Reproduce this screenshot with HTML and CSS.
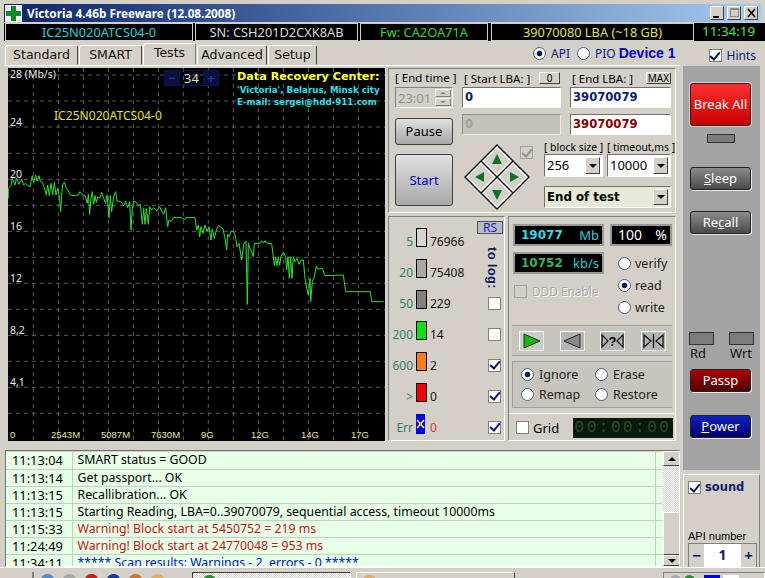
FILE: index.html
```html
<!DOCTYPE html>
<html>
<head>
<title>Victoria 4.46b Freeware</title>
<link rel="stylesheet" href="styles.css">
</head>
<body>
<div class="window">

  <header class="titlebar">
    <svg class="app-icon" width="17" height="17" viewBox="0 0 17 17">
      <rect width="17" height="17" fill="#f4f4ec"/>
      <path d="M6 1h5v5h5v5h-5v5H6v-5H1V6h5z" fill="#0f8a2a"/>
    </svg>
    <span class="title">Victoria 4.46b Freeware (12.08.2008)</span>
    <div class="win-buttons">
      <span class="win-btn"><svg width="15" height="14"><rect x="3" y="10" width="6" height="2" fill="#000"/></svg></span>
      <span class="win-btn"><svg width="15" height="14"><rect x="3.5" y="2.5" width="8" height="8" fill="none" stroke="#888"/><rect x="3" y="2" width="9" height="2" fill="#888"/></svg></span>
      <span class="win-btn"><svg width="15" height="14"><path d="M4 3l7 8M11 3l-7 8" stroke="#000" stroke-width="1.6"/></svg></span>
    </div>
  </header>

  <div class="infobar">
    <div class="info w-model cyan">IC25N020ATCS04-0</div>
    <div class="info w-sn">SN: CSH201D2CXK8AB</div>
    <div class="info w-fw green">Fw: CA2OA71A</div>
    <div class="info w-lba yellow">39070080 LBA (~18 GB)</div>
    <div class="clock">11:34:19</div>
  </div>

  <div class="tabrow">
    <div class="tabs">
      <span class="tab w-standard">Standard</span>
      <span class="tab w-smart">SMART</span>
      <span class="tab active w-tests">Tests</span>
      <span class="tab w-advanced">Advanced</span>
      <span class="tab w-setup">Setup</span>
    </div>
    <div class="modes">
      <span class="radio on"></span><span class="mode-label">API</span>
      <span class="radio"></span><span class="mode-label">PIO</span>
      <b class="device">Device 1</b>
    </div>
    <div class="hints"><span class="chk on"></span><span class="hints-label">Hints</span></div>
  </div>

  <div class="work">
    <div class="left">
      <div class="top">

        <section class="chart">
          <svg class="plot" width="377" height="373" viewBox="24 -246 1131 1119">
            <path class="grid" d="M100 -246V873M175 -246V873M250 -246V873M325 -246V873M400 -246V873M475 -246V873M550 -246V873M625 -246V873M700 -246V873M775 -246V873M850 -246V873M925 -246V873M1000 -246V873M1075 -246V873M24 -225H1155M24 -147H1155M24 -69H1155M24 10H1155M24 88H1155M24 166H1155M24 244H1155M24 322H1155M24 400H1155M24 478H1155M24 556H1155M24 634H1155M24 712H1155M24 790H1155"/>
            <g transform="translate(15,45)">
              <polyline class="trace" points="10,100 10,70 18,62 22,40 30,60 34,40 42,58 50,42 56,60 62,55 68,62 76,65 78,50 82,32 86,52 92,30 96,48 102,32 106,50 112,52 118,68 124,90 128,60 133,92 138,55 143,90 148,52 153,90 158,70 163,95 167,140 170,90 173,60 178,52 184,70 190,78 196,90 204,92 220,90 225,80 232,90 240,92 247,115 250,88 254,148 258,100 262,80 266,118 270,92 274,112 278,95 284,100 290,82 296,100 302,115 306,90 312,158 316,92 320,140 326,95 332,80 336,108 348,110 356,122 362,108 368,128 374,110 378,195 382,130 386,108 394,112 400,122 406,118 412,178 416,130 420,178 424,130 430,178 434,125 440,135 446,128 456,138 464,125 470,138 476,148 482,128 488,185 492,165 498,170 506,158 530,158 538,164 544,158 570,158"/>
            </g>
            <g transform="translate(585,165)">
              <polyline class="trace" points="0,38 5,75 10,60 14,95 18,65 24,85 30,60 36,80 42,65 48,105 52,72 58,100 64,75 70,62 76,65 84,72 90,100 95,135 98,88 103,95 108,78 118,82 122,100 126,125 132,115 140,165 146,118 153,108 157,298 160,115 165,130 170,140 175,155 178,116 196,114 200,107 206,114 210,107 214,114 230,116 235,155 238,182 242,155 246,182 250,155 254,180 258,155 265,142 272,155 275,195 279,155 283,220 287,155 291,220 295,155 300,170 306,160 312,178 318,165 325,165 330,220 335,250 340,270 345,220 347,290 352,230 358,215 364,183 368,192 382,190 390,212 445,210 448,232 452,260 526,260 530,290 566,290"/>
            </g>
          </svg>
          <div class="y-title">28 (Mb/s)</div>
          <div class="y-labels">
            <div>24</div><div>20</div><div>16</div><div>12</div><div>8,2</div><div>4,1</div>
          </div>
          <div class="x-labels">
            <span>0</span><span>2543M</span><span>5087M</span><span>7630M</span><span>9G</span><span>12G</span><span>14G</span><span>17G</span>
          </div>
          <div class="chart-model">IC25N020ATCS04-0</div>
          <div class="scale">
            <span class="scale-btn">&minus;</span><span class="scale-val">34</span><span class="scale-btn">+</span>
          </div>
          <div class="promo">
            <div class="promo-head">Data Recovery Center:</div>
            <div class="promo-line">'Victoria', Belarus, Minsk city</div>
            <div class="promo-line">E-mail: sergei@hdd-911.com</div>
          </div>
        </section>

        <section class="controls">
          <div class="upper">
            <div class="col-time">
              <div class="cap">[ End time ]</div>
              <div class="time-field">
                <span>23:01</span>
                <span class="spin"><i class="spin-btn spin-up"></i><i class="spin-btn spin-down"></i></span>
              </div>
              <div class="btn pause">Pause</div>
              <div class="btn start">Start</div>
            </div>
            <div class="col-lba">
              <div class="lba-grid">
                <div class="cap-row"><span>[ Start LBA: ]</span><span class="mini-btn w-zero">0</span></div>
                <div class="cap-row"><span>[ End LBA: ]</span><span class="mini-btn">MAX</span></div>
                <div class="field navy">0</div>
                <div class="field navy">39070079</div>
                <div class="field off">0</div>
                <div class="field maroon">39070079</div>
              </div>
              <div class="lba-bottom">
                <div class="dpad-area">
                  <svg class="dpad" width="68" height="68" viewBox="0 0 68 68">
                    <path d="M34 1L67 34 34 67 1 34z" fill="#111"/>
                    <path d="M34 3L49 18 34 33 19 18z M50 19L65 34 50 49 35 34z M18 19L33 34 18 49 3 34z M34 35L49 50 34 65 19 50z" fill="#fff"/>
                    <path d="M34 5L47 18 34 31 21 18z M50 21L63 34 50 47 37 34z M18 21L31 34 18 47 5 34z M34 37L47 50 34 63 21 50z" fill="#d4d0c8"/>
                    <path d="M34 11l5 10H29z M56 34l-9 5V29z M12 34l9-5v10z M34 57l-5-10h10z" fill="#10702a"/>
                  </svg>
                  <span class="chk dim on"></span>
                </div>
                <div class="combos">
                  <div class="combo-row">
                    <div class="w-block"><div class="cap cap-small">[ block size ]</div><div class="combo"><span class="combo-text">256</span><span class="arrow"></span></div></div>
                    <div class="w-timeout"><div class="cap cap-small">[ timeout,ms ]</div><div class="combo"><span class="combo-text">10000</span><span class="arrow"></span></div></div>
                  </div>
                  <div class="combo end-test"><span class="combo-text">End of test</span><span class="arrow"></span></div>
                </div>
              </div>
            </div>
          </div>

          <div class="lower">
            <div class="legend">
              <span class="num">5</span><span class="swatch s5"></span><span class="val">76966</span>
              <div class="log-head"><span class="rs">RS</span><span class="to-log">to log:</span></div>
              <span class="num">20</span><span class="swatch s20"></span><span class="val">75408</span>
              <span class="num">50</span><span class="swatch s50"></span><span class="val">229</span><span class="chk"></span>
              <span class="num">200</span><span class="swatch s200"></span><span class="val">14</span><span class="chk"></span>
              <span class="num">600</span><span class="swatch s600"></span><span class="val">2</span><span class="chk on"></span>
              <span class="num">&gt;</span><span class="swatch s-over"></span><span class="val">0</span><span class="chk on"></span>
              <span class="num">Err</span>
              <span class="swatch s-err"><svg width="9" height="20"><path d="M1 6l7 8M8 6l-7 8" stroke="#ffe24a" stroke-width="1.6"/></svg></span>
              <span class="val err-val">0</span><span class="chk on"></span>
            </div>

            <div class="stats">
              <div class="lcd-row">
                <div class="lcd w-mb"><b class="lcd-cyan">19077</b><span class="lcd-unit">Mb</span></div>
                <div class="lcd w-pct"><span class="lcd-white">100</span><span class="lcd-white">%</span></div>
              </div>
              <div class="mid">
                <div class="mid-left">
                  <div class="lcd w-mb"><b class="lcd-green">10752</b><span class="lcd-unit">kb/s</span></div>
                  <div class="ddd"><span class="chk dim"></span><span class="ddd-label">DDD Enable</span></div>
                </div>
                <div class="mid-right">
                  <label class="opt"><span class="radio"></span>verify</label>
                  <label class="opt"><span class="radio on"></span>read</label>
                  <label class="opt"><span class="radio"></span>write</label>
                </div>
              </div>
              <div class="transport">
                <span class="t-btn t-first"><svg width="25" height="20"><path d="M5 3l16 7-16 7z" fill="#22b014" stroke="#0a3a0a"/></svg></span>
                <span class="t-btn"><svg width="25" height="20"><path d="M20 3L4 10l16 7z" fill="#8a8a8a" stroke="#222"/></svg></span>
                <span class="t-btn"><svg width="25" height="20"><path d="M2 4l6 6-6 6zM23 4l-6 6 6 6z" fill="none" stroke="#111" stroke-width="1.3"/><text x="12.5" y="15" class="t-q">?</text></svg></span>
                <span class="t-btn"><svg width="25" height="20"><path d="M3 4l7 6-7 6zM22 4l-7 6 7 6z" fill="none" stroke="#111" stroke-width="1.3"/><path d="M12.5 3v14" stroke="#111" stroke-width="1.3"/></svg></span>
              </div>
              <div class="modes-box">
                <label class="opt"><span class="radio on"></span>Ignore</label>
                <label class="opt"><span class="radio"></span>Erase</label>
                <label class="opt"><span class="radio"></span>Remap</label>
                <label class="opt"><span class="radio"></span>Restore</label>
              </div>
              <div class="grid-row">
                <span class="chk"></span><span class="grid-label">Grid</span>
                <div class="led">00:00:00</div>
              </div>
            </div>
          </div>
        </section>
      </div>

      <section class="log">
        <table class="log-table" cellspacing="0">
          <tr><td class="t">11:13:04</td><td>SMART status = GOOD</td><td class="pad"></td></tr>
          <tr><td class="t">11:13:14</td><td>Get passport... OK</td><td class="pad"></td></tr>
          <tr><td class="t">11:13:15</td><td>Recallibration... OK</td><td class="pad"></td></tr>
          <tr><td class="t">11:13:15</td><td>Starting Reading, LBA=0..39070079, sequential access, timeout 10000ms</td><td class="pad"></td></tr>
          <tr><td class="t">11:15:33</td><td class="warn">Warning! Block start at 5450752 = 219 ms</td><td class="pad"></td></tr>
          <tr><td class="t">11:24:49</td><td class="warn">Warning! Block start at 24770048 = 953 ms</td><td class="pad"></td></tr>
          <tr><td class="t">11:34:11</td><td class="scan">***** Scan results: Warnings - 2, errors - 0 *****</td><td class="pad"></td></tr>
        </table>
        <div class="scrollbar">
          <span class="sb-btn"><i class="up"></i></span>
          <span class="sb-track"></span>
          <span class="sb-thumb"></span>
          <span class="sb-btn"><i class="arrow-down"></i></span>
        </div>
      </section>
    </div>

    <aside class="right">
      <div class="side">
        <div class="side-btn red big">Break All</div>
        <div class="small-led"></div>
        <div class="side-btn gray sleep"><span><u>S</u>leep</span></div>
        <div class="side-btn gray recall"><span>Re<u>c</u>all</span></div>
        <div class="rw">
          <div class="rw-item"><div class="rw-led"></div>Rd</div>
          <div class="rw-item"><div class="rw-led"></div>Wrt</div>
        </div>
        <div class="side-btn dark-red passp">Passp</div>
        <div class="side-btn blue power"><span><u>P</u>ower</span></div>
      </div>
      <div class="sound-box">
        <div class="sound"><span class="chk on"></span><b>sound</b></div>
        <div class="api-label">API number</div>
        <div class="api-spin"><b>&minus;</b><span>1</span><b>+</b></div>
      </div>
    </aside>
  </div>

  <footer class="taskbar">
    <span class="tb-sep"></span>
    <div class="tb-icons">
      <i class="ti ti-blue"></i><i class="ti ti-gray"></i><i class="ti ti-red"></i><i class="ti ti-navy"></i><i class="ti ti-orange"></i><i class="ti ti-tan"></i>
    </div>
    <span class="tb-task pressed"><i class="ti ti-green"></i></span>
    <span class="tb-task"><i class="ti ti-tan"></i></span>
    <div class="tray"><i class="ti ti-gray"></i><i class="ti ti-green"></i><i class="tray-blue"></i><i class="tray-white"></i></div>
  </footer>
</div>
</body>
</html>
```

FILE: styles.css
```css
* {box-sizing: border-box;}
html, body {margin: 0; padding: 0;}
body {width: 765px; height: 578px; overflow: hidden; background: #d4d0c8; color: #000; font: 12px "Noto Sans", "Liberation Sans", sans-serif;}
.window {height: 578px; padding-top: 4px; display: flex; flex-direction: column; overflow: hidden;}

/* title bar */
.titlebar {height: 18px; margin: 0 4px 1px 4px; padding-left: 1px; display: flex; align-items: center; background: linear-gradient(to right, #0a246a, #a6caf0); color: #fff;}
.title {margin-left: 5px; font: bold 11.75px "Noto Sans", sans-serif; white-space: nowrap;}
.win-buttons {margin-left: auto; margin-right: 3px; display: flex; gap: 3px;}
.win-btn {width: 14px; height: 14px; background: #d4d0c8; border: 1px solid; border-color: #fff #404040 #404040 #fff; display: flex; overflow: hidden;}
.win-btn svg {margin: -1px; flex: none;}

/* info bar */
.infobar {height: 18px; margin-left: 4px; padding: 0 0 0 1px; display: flex; gap: 2px; background: #000; font-size: 12.8px; line-height: 16px;}
.info {border: 1px solid #d0d0d0; text-align: center; color: #d8d8d8; white-space: nowrap;}
.w-model {width: 188px;}
.w-sn {width: 163px;}
.w-fw {width: 128px;}
.w-lba {width: 203px; margin-left: 1px;}
.clock {color: #55e055; margin-left: 6px; line-height: 17px; font-size: 13.4px;}
.cyan {color: #30d0d0;}
.green {color: #40d040;}
.yellow {color: #e0e060;}

/* tabs */
.tabrow {height: 24px; padding-left: 5px; display: flex; align-items: flex-end;}
.tabs {display: flex; gap: 1px; align-items: flex-end;}
.tab {height: 20px; border: 1px solid; border-color: #fff #404040 transparent #fff; border-radius: 3px 3px 0 0; text-align: center; font: 12.5px/18px "DejaVu Sans", sans-serif; color: #111;}
.tab.active {height: 22px; border-right-color: #808080; background: #d4d0c8;}
.w-standard {width: 73px;}
.w-smart {width: 63px;}
.w-tests {width: 53px;}
.w-advanced {width: 70px;}
.w-setup {width: 49px;}
.modes {margin-left: 216px; align-self: flex-start; margin-top: 5px; display: flex; align-items: center; height: 14px;}
.mode-label {margin: 0 7px 0 5px; color: #0a1a80;}
.device {margin-left: -4px; color: #0000c0; font: bold 14px "Liberation Sans", sans-serif;}
.hints {margin-left: 33px; align-self: flex-start; margin-top: 6px; display: flex; align-items: center;}
.hints-label {margin-left: 5px; color: #0a1a80; font-size: 12px;}

/* shared controls */
.radio {width: 13px; height: 13px; flex: none; border-radius: 50%; border: 1px solid #4a5a80; background: #fff; display: inline-block;}
.radio.on {background: radial-gradient(circle, #0a1a60 0 2.4px, #fff 3.2px);}
.chk {width: 13px; height: 13px; flex: none; display: grid; place-items: center; background: #fff; border: 1px solid #808080;}
.chk.on::after {content: ""; width: 4px; height: 8px; margin-top: -2px; border: solid #0a1a60; border-width: 0 2px 2px 0; transform: rotate(40deg);}
.chk.dim {background: #d4d0c8; border-color: #a0a0a0;}
.chk.dim::after {border-color: #909090;}

/* chart */
.work {flex: 1; display: flex; min-height: 0;}
.left {width: 680px; flex: none;}
.top {height: 380px; margin-left: 4px; padding: 2px 0 0 4px; display: flex; gap: 3px; border-top: 1px solid #fff;}
.chart {position: relative; width: 377px; height: 373px; flex: none; background: #000; color: #fff; overflow: hidden; font: 10.5px "Noto Sans", sans-serif;}
.plot {display: block;}
.grid {fill: none; stroke: #5c5c5c; stroke-width: 3; stroke-dasharray: 12 12;}
.trace {fill: none; stroke: #35e035; stroke-width: 3; stroke-linejoin: round;}
.y-title {position: absolute; left: 2px; top: 0; line-height: 12px; color: #e8e8e8;}
.y-labels {position: absolute; left: 2px; top: 28px;}
.y-labels div {height: 52px; line-height: 52px; color: #e8e8e8;}
.x-labels {position: absolute; left: 0; bottom: 0; height: 16px; display: flex; color: #e8e8a0; font: 9.5px "Liberation Sans", sans-serif;}
.x-labels span {width: 50px; line-height: 20px;}
.x-labels span:first-child {width: 43px; padding-left: 2px;}
.chart-model {position: absolute; left: 46px; top: 39px; font-size: 12.1px; color: #e0e040;}
.scale {position: absolute; left: 156px; top: 2px; height: 16px; display: flex; border: 1px solid #0a1450; color: #d8d8d8; font-size: 13px; line-height: 14px;}
.scale-btn {width: 14px; background: #0a1040; color: #2a3a80; text-align: center; font-weight: bold;}
.scale-val {width: 25px; text-align: center; border: solid #0a1450; border-width: 0 1px;}
.promo {position: absolute; left: 229px; top: 1px; font-weight: bold; font-family: "DejaVu Sans", sans-serif; white-space: nowrap;}
.promo-head {color: #ffff40; font-size: 11.2px; line-height: 15px;}
.promo-line {color: #30e0e8; font-size: 8.7px; line-height: 12px;}

/* upper controls */
.controls {width: 288px; flex: none; height: 373px;}
.upper {height: 145px; padding-left: 6px; border: 1px solid; border-color: #808080 #fff #fff #808080; display: flex; gap: 9px;}
.col-time {width: 58px; flex: none;}
.cap {height: 18px; line-height: 18px; white-space: nowrap; font-size: 11.5px; text-align: center;}
.time-field {height: 21px; display: flex; align-items: center; justify-content: space-between; padding: 0 1px 0 2px; background: #d4d0c8; border: 1px solid; border-color: #808080 #fff #fff #808080; color: #909090; font-size: 13px;}
.spin {width: 16px; height: 17px; display: flex; flex-direction: column; gap: 1px;}
.spin-btn {flex: 1; display: grid; place-items: center; background: #d4d0c8; border: 1px solid; border-color: #fff #808080 #808080 #fff;}
.spin-up::after {content: ""; border: solid transparent; border-width: 0 3px 2px; border-bottom-color: #808080;}
.spin-down::after {content: ""; border: solid transparent; border-width: 2px 3px 0; border-top-color: #808080;}
.btn {border: 1px solid #404040; border-radius: 3px; background: linear-gradient(#e0e0e0, #a8a8a8); text-align: center; font-size: 13px;}
.pause {height: 27px; margin-top: 10px; line-height: 25px;}
.start {height: 52px; margin-top: 9px; line-height: 50px; color: #0000c0;}
.col-lba {width: 209px; flex: none;}
.lba-grid {display: grid; grid-template-columns: 99px 101px; column-gap: 9px; grid-template-rows: 18px 21px 27px;}
.cap-row {display: flex; justify-content: space-between; align-items: center; padding-left: 2px; font-size: 11.5px; white-space: nowrap;}
.mini-btn {height: 12px; min-width: 24px; margin-top: -1px; padding: 0 1px; background: #d4d0c8; border: 1px solid; border-color: #fff #404040 #404040 #fff; font-size: 10px; line-height: 10px; text-align: center;}
.mini-btn.w-zero {min-width: 21px; margin-right: 1px;}
.field {height: 21px; border: 1px solid; border-color: #707070 #fff #fff #707070; background: #fff; padding-left: 2px; font: bold 11.6px/19px "DejaVu Sans", sans-serif;}
.lba-grid .field:nth-of-type(n+5) {margin-top: 6px;}
.navy {color: #0a1a70;}
.maroon {color: #800000;}
.off {background: #c4c1ba; color: #a0a0a0; border-color: #909090 #e8e8e8 #e8e8e8 #909090;}
.lba-bottom {display: flex; margin-top: 5px;}
.dpad-area {position: relative; width: 82px; flex: none;}
.dpad {display: block; margin: 3px 0 0 1px;}
.dpad-area .chk {position: absolute; left: 58px; top: 6px;}
.combos {width: 127px; flex: none;}
.combo-row {display: flex; gap: 4px; margin-bottom: 9px;}
.cap-small {height: 14px; line-height: 14px; font-size: 10.4px;}
.w-block {width: 59px;}
.w-timeout {width: 64px;}
.combo {height: 23px; display: flex; align-items: center; padding: 2px; background: #fff; border: 1px solid; border-color: #707070 #fff #fff #707070;}
.combo-text {flex: 1; font-size: 13px; line-height: 17px;}
.arrow {width: 15px; height: 100%; display: grid; place-items: center; background: #d4d0c8; border: 1px solid; border-color: #fff #404040 #404040 #fff;}
.arrow::after {content: ""; border: solid transparent; border-width: 4px 4px 0; border-top-color: #000;}
.end-test {height: 22px; background: #e6e8d8;}
.end-test .combo-text {font: bold 11.8px "DejaVu Sans", sans-serif;}

/* lower left: latency legend */
.lower {display: flex; gap: 3px; margin-top: 3px; height: 225px;}
.legend {width: 117px; flex: none; padding: 5px 0 0 0; border: 1px solid; border-color: #808080 #fff #fff #808080; display: grid; grid-template-columns: 27px 14px 1fr 27px; grid-auto-rows: 31px; align-items: center;}
.num {margin-top: 8px; text-align: right; padding-right: 3px; color: #2a8070; font-size: 12px;}
.swatch {width: 11px; height: 19px; border: 1px solid #000;}
.s5 {background: #d4d4d4;}
.s20 {background: #a8a8a8;}
.s50 {background: #808080;}
.s200 {background: #10e010;}
.s600 {background: #f88010;}
.s-over {background: #f00000;}
.s-err {width: 9px; height: 20px; background: #0000e0; border: 0;}
.s-err svg {display: block;}
.val {margin-top: 8px; font-size: 12px; color: #111;}
.err-val {color: #e03030;}
.legend .chk {justify-self: start; margin: 7px 0 0 11px;}
.log-head {grid-row: span 2; align-self: start; margin-top: -1px; display: flex; flex-direction: column; align-items: center;}
.rs {width: 26px; height: 13px; margin-left: -1px; background: #b8bcc8; border: 1px solid #505050; color: #2020c0; font-size: 12px; line-height: 11px; text-align: center;}
.to-log {margin-top: 13px; margin-left: 3px; writing-mode: vertical-rl; color: #0a1a60; font: bold 13px "Liberation Sans", sans-serif; letter-spacing: .3px;}

/* lower right: counters */
.stats {width: 168px; flex: none; padding: 7px 0 0 3px; border: 1px solid; border-color: #808080 #fff #fff #808080;}
.lcd-row {display: flex; gap: 6px; padding-left: 1px;}
.lcd {height: 22px; display: flex; justify-content: space-between; padding: 0 3px 0 6px; background: #000; border: 2px solid #9c9a94; line-height: 18px;}
.w-mb {width: 91px;}
.w-pct {width: 62px; padding: 0 3px 0 6px;}
.lcd-cyan {color: #38d8e8; font: bold 12px/18px "DejaVu Sans", sans-serif;}
.lcd-green {color: #40b060; font: bold 12px/18px "DejaVu Sans", sans-serif;}
.lcd-unit {color: #38c8d8; font-size: 13px;}
.lcd-white {color: #fff; font-size: 14px;}
.mid {display: flex; margin: 6px 0 0 1px; height: 66px;}
.mid-left {width: 105px; flex: none;}
.mid-right {display: flex; flex-direction: column;}
.opt {height: 22px; display: flex; align-items: center; gap: 4px; color: #222; font-size: 12.5px;}
.ddd {height: 22px; margin: 6px 0 0 1px; display: flex; align-items: center; gap: 5px;}
.ddd-label {color: #a8a8a8; text-shadow: 1px 1px 0 #fff; font-size: 11.8px; white-space: nowrap;}
.transport {width: 160px; height: 31px; margin-top: 7px; padding: 0 6px 0 7px; display: flex; justify-content: space-between; align-items: center; background: #c8c5be; border: solid #a0a0a0; border-width: 1px 0 1px 0;}
.t-btn {width: 25px; height: 20px; background: #b4b4b4; border: 1px solid; border-color: #fff #e8e8e8 #e8e8e8 #fff; display: flex;}
.t-first {background: #cccccc;}
.t-btn svg {margin: -1px; flex: none;}
.t-q {font: bold 13px "Liberation Sans", sans-serif; text-anchor: middle;}
.modes-box {width: 160px; height: 47px; margin-top: 5px; padding: 2px 0 3px 8px; display: grid; grid-template-columns: 74px 1fr; grid-auto-rows: 20px; background: #c8c5be; border: 1px solid #a0a0a0; border-right: 0;}
.modes-box .opt {height: 20px; gap: 5px;}
.grid-row {height: 26px; margin: 5px 0 0 -3px; padding: 2px 2px 0 7px; display: flex; align-items: center; border-top: 1px solid #fff;}
.grid-label {margin-left: 4px; font-size: 13px;}
.led {margin-left: auto; width: 100px; height: 20px; background: #0a1a0a; color: #2c4c2c; text-align: center; font: 16px/20px "Liberation Mono", monospace; letter-spacing: 2.5px;}

/* log */
.log {display: flex; height: 117px; margin: 5px 0 0 5px; overflow: hidden; border: 1px solid; border-color: #707070 #fff #fff #707070;}
.log-table {width: 657px; flex: none; margin-top: 1px; border-collapse: collapse; table-layout: fixed; background: #e6ffe6; align-self: flex-start;}
.log-table td {height: 17px; padding: 0 0 0 5px; border-bottom: 1px solid #bcd4bc; border-left: 1px solid #bcd4bc; white-space: nowrap; font-size: 12.3px; line-height: 14px; overflow: hidden;}
.log-table td.t {width: 66px; padding-left: 6px; border-left: 0; font-size: 12.8px;}
.log-table td.pad {width: 8px; padding: 0;}
.warn {color: #c01818;}
.scan {color: #0018c0;}
.scrollbar {width: 17px; flex: none; display: flex; flex-direction: column;}
.sb-btn {height: 15px; flex: none; display: grid; place-items: center; background: #d4d0c8; border: 1px solid; border-color: #fff #404040 #404040 #fff;}
.sb-btn:last-child {height: 11px;}
.sb-btn .up {border: solid transparent; border-width: 0 4px 4px; border-bottom-color: #000;}
.sb-btn .arrow-down {border: solid transparent; border-width: 4px 4px 0; border-top-color: #000;}
.sb-track {height: 46px; flex: none; background: repeating-conic-gradient(#fff 0 25%, #d4d0c8 0 50%) 0 0 / 2px 2px;}
.sb-thumb {flex: 1; background: #d4d0c8; border: 1px solid; border-color: #fff #404040 #404040 #fff;}

/* right column */
.right {width: 77px; flex: none; margin: 1px 0 0 3px;}
.side {height: 404px; padding: 17px 9px 0 7px; background: #a3a3a3; color: #111;}
.side-btn {height: 23px; border: 1px solid #222; box-shadow: 1px 1px 0 #e8e8e8; border-radius: 3px; text-align: center; color: #fff; font-size: 13px; line-height: 21px;}
.red {background: linear-gradient(#ff3030, #c80000); box-shadow: 0 0 0 1px #f0c8c8;}
.big {height: 43px; line-height: 41px;}
.small-led {width: 28px; height: 9px; margin: 8px 0 0 17px; background: #7c7c7c; border: 1px solid #333;}
.gray {background: linear-gradient(#8c8c8c, #4a4a4a);}
.sleep {margin-top: 24px;}
.recall {margin-top: 21px;}
.rw {display: flex; justify-content: space-between; margin: 98px -3px 0 -1px; height: 30px; font-size: 13px; line-height: 15px;}
.rw-item {width: 25px; padding-left: 1px;}
.rw-led {height: 13px; margin: 0 0 1px -1px; background: #7c7c7c; border: 1px solid #333;}
.dark-red {background: linear-gradient(#b00000, #500000);}
.passp {margin-top: 7px;}
.blue {background: linear-gradient(#1020c0, #000070);}
.power {margin-top: 23px;}
.sound-box {height: 100px; margin-top: 4px; padding: 5px 3px 0 4px; border: 1px solid; border-color: #fff #808080 #808080 #fff;}
.sound {display: flex; align-items: center; gap: 4px; color: #0a1a70; font: bold 11.5px/15px "DejaVu Sans", sans-serif;}
.api-label {margin-top: 34px; font: 11px/14px "Liberation Sans", sans-serif;}
.api-spin {width: 69px; height: 30px; display: flex; border: 1px solid #808080; color: #0a1a70; font-size: 14px; line-height: 22px; text-align: center;}
.api-spin b {width: 15px; font-size: 15px;}
.api-spin span {flex: 1; background: #fff; font-weight: bold;}

/* taskbar, cut off by the capture */
.taskbar {height: 11px; flex: none; padding-top: 4px; display: flex; align-items: flex-start; background: #d4d0c8; border-top: 1px solid #fff; overflow: hidden;}
.tb-sep {width: 2px; height: 8px; margin-left: 32px; background: #808080;}
.tb-icons {width: 158px; flex: none; padding: 2px 0 0 7px; display: flex; gap: 9px;}
.ti {width: 13px; height: 14px; flex: none; display: block; border-radius: 6px 6px 0 0;}
.ti-blue {background: #5a88c8;}
.ti-gray {background: #a8a8a8;}
.ti-red {background: #c02020;}
.ti-navy {background: #1a3a90;}
.ti-orange {background: #c87830;}
.ti-tan {background: #d8b070;}
.ti-green {background: #2a8a3a;}
.tb-task {width: 159px; height: 8px; flex: none; padding: 2px 0 0 6px; border: 1px solid; border-color: #fff #404040 #404040 #fff; border-bottom: 0;}
.tb-task.pressed {padding-left: 10px; border-color: #404040 #fff #fff #404040; background: repeating-conic-gradient(#fff 0 25%, #d4d0c8 0 50%) 0 0 / 2px 2px;}
.tb-task + .tb-task {margin-left: 5px;}
.tray {width: 102px; height: 8px; margin-left: auto; padding: 2px 0 0 6px; display: flex; gap: 3px; border: 1px solid; border-color: #808080 #fff #fff #808080;}
.tray .ti {width: 11px;}
.tray-blue {width: 16px; height: 14px; background: #0000e0; margin-left: 6px;}
.tray-white {width: 16px; height: 14px; background: #fff;}
```
